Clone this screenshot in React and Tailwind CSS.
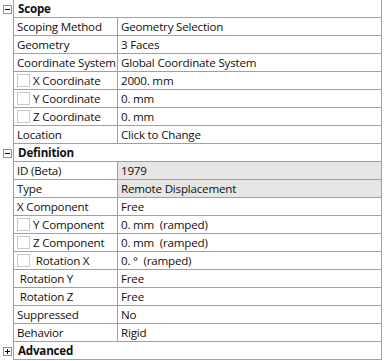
import React from 'react';

const rows = [
  { header: 'Scope', open: true },
  { label: 'Scoping Method', value: 'Geometry Selection' },
  { label: 'Geometry', value: '3 Faces' },
  { label: 'Coordinate System', value: 'Global Coordinate System' },
  { label: 'X Coordinate', value: '2000. mm', check: true },
  { label: 'Y Coordinate', value: '0. mm', check: true },
  { label: 'Z Coordinate', value: '0. mm', check: true },
  { label: 'Location', value: 'Click to Change' },
  { header: 'Definition', open: true },
  { label: 'ID (Beta)', value: '1979', shaded: true },
  { label: 'Type', value: 'Remote Displacement', shaded: true },
  { label: 'X Component', value: 'Free' },
  { label: 'Y Component', value: '0. mm  (ramped)', check: true },
  { label: 'Z Component', value: '0. mm  (ramped)', check: true },
  { label: ' Rotation X', value: '0. °  (ramped)', check: true },
  { label: ' Rotation Y', value: 'Free' },
  { label: ' Rotation Z', value: 'Free' },
  { label: 'Suppressed', value: 'No' },
  { label: 'Behavior', value: 'Rigid' },
  { header: 'Advanced', open: false },
];

const Toggle = ({ open }) => (
  <div className="w-[9px] h-[9px] border border-[#919191] bg-white flex items-center justify-center relative">
    <div className="w-[5px] h-px bg-black" />
    {!open && <div className="absolute w-px h-[5px] bg-black" />}
  </div>
);

const App = () => {
  return (
    <div className="w-[385px] h-[361px] bg-white text-[11.6px] tracking-[-0.2px] leading-none text-[#111] font-['Open_Sans',sans-serif] overflow-hidden">
      {rows.map((row, i) => (
        <div key={i} className="flex h-[18px]">
          {/* tree gutter */}
          <div className="w-[13px] shrink-0 flex items-center justify-center pl-px">
            {row.header && <Toggle open={row.open} />}
          </div>
          {row.header ? (
            <div className="w-[369px] border-l border-r border-b border-[#a0a0a0] flex items-center pl-[4px] font-bold">
              {row.header}
            </div>
          ) : (
            <div className="w-[369px] border-l border-r border-b border-[#a0a0a0] flex">
              <div className="w-[104px] shrink-0 border-r border-[#a0a0a0] flex items-center pl-[3px] whitespace-pre">
                {row.check && (
                  <div className="w-[13px] h-[13px] border border-[#c8c8c8] bg-white mr-[3px] shrink-0" />
                )}
                {row.label}
              </div>
              <div
                className={`flex-1 flex items-center pl-[3px] whitespace-pre ${
                  row.shaded ? 'bg-[#e6e6e4]' : ''
                }`}
              >
                {row.value}
              </div>
            </div>
          )}
        </div>
      ))}
    </div>
  );
};

export default App;
